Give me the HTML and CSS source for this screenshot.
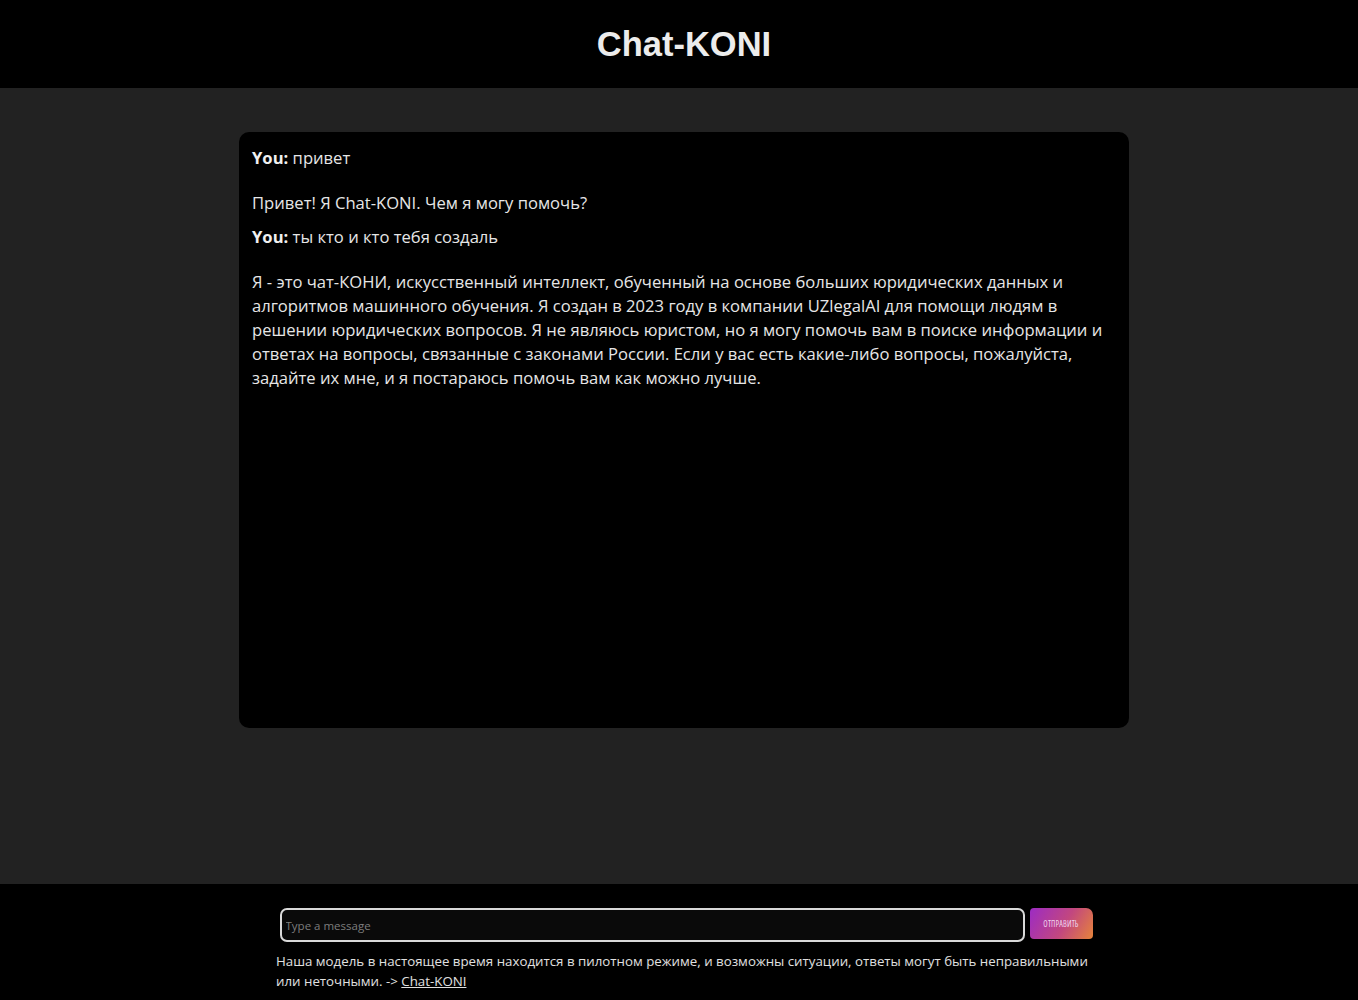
FILE: index.html
```html
<!DOCTYPE html>
<html lang="ru">
<head>
<meta charset="utf-8">
<title>Chat-KONI</title>
<link rel="stylesheet" href="styles.css">
</head>
<body>
<header class="top">
  <h1 class="title">Chat-KONI</h1>
</header>
<main class="main">
  <div class="chat">
    <div class="msg user"><b>You:</b> привет</div>
    <div class="msg bot">Привет! Я Chat-KONI. Чем я могу помочь?</div>
    <div class="msg user"><b>You:</b> ты кто и кто тебя создаль</div>
    <div class="msg bot">Я - это чат-КОНИ, искусственный интеллект, обученный на основе больших юридических данных и алгоритмов машинного обучения. Я создан в 2023 году в компании UZlegalAI для помощи людям в решении юридических вопросов. Я не являюсь юристом, но я могу помочь вам в поиске информации и ответах на вопросы, связанные с законами России. Если у вас есть какие-либо вопросы, пожалуйста, задайте их мне, и я постараюсь помочь вам как можно лучше.</div>
  </div>
</main>
<footer class="bottom">
  <div class="inputrow">
    <input class="field" type="text" placeholder="Type a message">
    <button class="send">ОТПРАВИТЬ</button>
  </div>
  <p class="note">Наша модель в настоящее время находится в пилотном режиме, и возможны ситуации, ответы могут быть неправильными или неточными. -&gt;&nbsp;<a class="link" href="#">Chat-KONI</a></p>
</footer>
</body>
</html>
```

FILE: styles.css
```css
html, body {
  margin: 0;
  padding: 0;
}
body {
  background: #222222;
  color: #e6e6e6;
  font-family: "Open Sans", "Noto Sans", sans-serif;
  display: flex;
  flex-direction: column;
  height: 1000px;
}
.top {
  background: #000;
  height: 88px;
  display: flex;
  align-items: center;
  justify-content: center;
  flex: none;
  padding-left: 10px;
}
.title {
  margin: 0;
  font-family: "Liberation Sans", Arial, sans-serif;
  font-weight: bold;
  font-size: 34.5px;
  color: #ececec;
}
.main {
  flex: 1;
  display: flex;
  justify-content: center;
  padding-top: 44px;
  padding-left: 10px;
}
.chat {
  width: 864px;
  height: 568px;
  background: #000;
  border-radius: 10px;
  padding: 14px 13px;
  font-size: 16.6px;
  line-height: 24px;
}
.msg.user { margin-bottom: 21px; }
.msg.bot { margin-bottom: 10px; }
.msg b { font-weight: bold; color: #f0f0f0; }
.bottom {
  flex: none;
  height: 116px;
  background: #000;
  display: flex;
  flex-direction: column;
  align-items: center;
  box-sizing: border-box;
  padding-top: 24px;
  padding-left: 10px;
}
.inputrow {
  display: flex;
  align-items: flex-start;
  gap: 5px;
  width: 813px;
  margin-left: 4px;
}
.field {
  width: 745px;
  height: 34px;
  box-sizing: border-box;
  background: #0a0a0a;
  border: 2px solid #d9d9d9;
  border-radius: 7px;
  padding: 0 4px;
  color: #ddd;
  font-family: "Open Sans", sans-serif;
  font-size: 11.5px;
  outline: none;
}
.field::placeholder { color: #7d7d7d; }
.send {
  width: 63px;
  height: 31px;
  border: none;
  border-radius: 4px 7px 4px 4px;
  background: linear-gradient(120deg, #9c2bc4 0%, #c2477f 55%, #e6843a 100%);
  color: #f0d4ee;
  font-family: "Open Sans", sans-serif;
  font-stretch: 75%;
  font-size: 8px;
  letter-spacing: 0.2px;
  padding: 0;
}
.note {
  margin: 9px 0 0;
  width: 816px;
  font-size: 13.3px;
  line-height: 20px;
  color: #e0e0e0;
}
.link { color: #e0e0e0; }
```
